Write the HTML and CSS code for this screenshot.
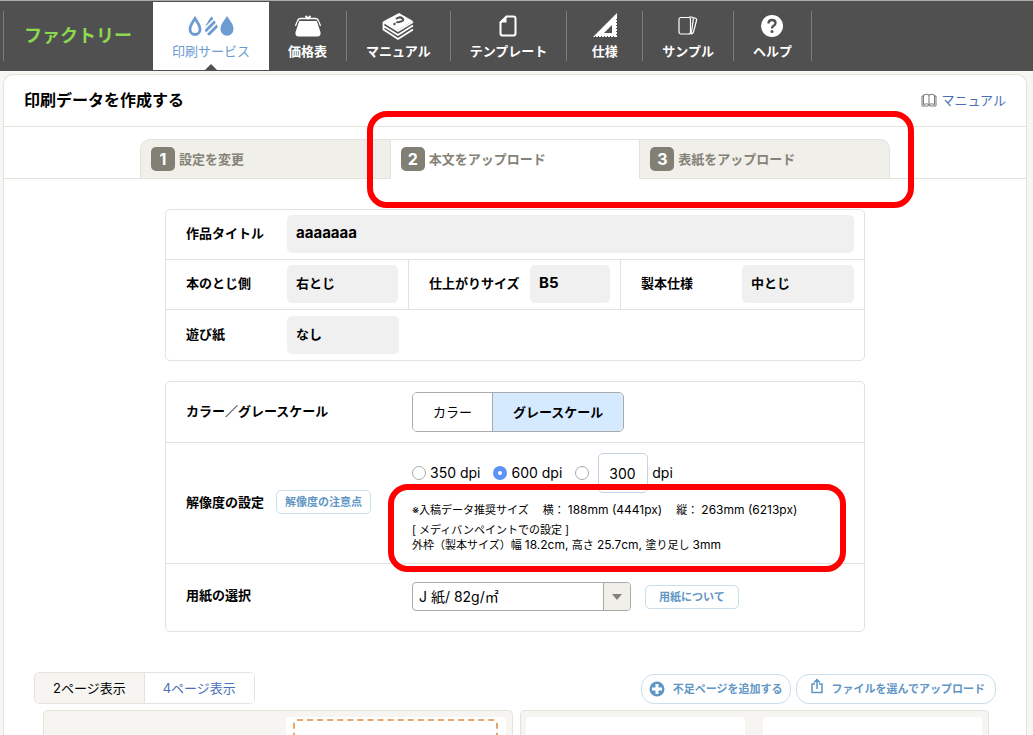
FILE: index.html
```html
<!DOCTYPE html>
<html lang="ja">
<head>
<meta charset="utf-8">
<meta name="viewport" content="width=device-width, initial-scale=1">
<title>印刷データを作成する</title>
<link rel="stylesheet" href="styles.css">
</head>
<body>
<header class="header">
  <a class="logo" href="#">ファクトリー</a>
  <nav class="nav">
    <a class="nav-item nav-item-active" href="#">
      <svg class="nav-icon" width="46" height="30" viewBox="0 0 46 30">
        <defs><clipPath id="drop-shape"><path d="M23.500 5c3 5 6.500 9 6.500 13.500a6.500 6.500 0 0 1-13 0c0-4.500 3.500-8.500 6.500-13.500z"/></clipPath></defs>
        <path d="M7 7.500C9 11 12 14 12 18.500a5 5 0 0 1-10 0c0-4.500 3-7.500 5-11z" fill="none" stroke="#6c9bd2" stroke-width="2.800"/>
        <path clip-path="url(#drop-shape)" d="M14 17L28 3M14 23.500L32 5.500M16 28L34 10" stroke="#6c9bd2" stroke-width="3" fill="none"/>
        <path d="M39 5c3 5 6.500 8 6.500 13a6.500 6.800 0 0 1-13 0c0-5 3.500-8 6.500-13z" fill="#6c9bd2"/>
      </svg>
      <span>印刷サービス</span>
    </a>
    <a class="nav-item" href="#">
      <svg class="nav-icon" width="30" height="30" viewBox="0 0 30 30">
        <path d="M6 10h18l3.500 11.500q.5 4-3 4h-19q-3.500 0-3-4z" fill="#fff"/>
        <path d="M2.500 15L5 9q.7-1.500 2.500-1.500h15Q24.300 7.500 25 9l2.500 6" fill="none" stroke="#fff" stroke-width="1.500"/>
        <path d="M5.500 10l-2 6M24.500 10l2 6" stroke="#505050" stroke-width="1"/>
        <path d="M12.500 5l2.500 2.500L17.500 5" stroke="#fff" stroke-width="1.800" fill="none"/>
      </svg>
      <span>価格表</span>
    </a>
    <a class="nav-item" href="#">
      <svg class="nav-icon" width="32" height="30" viewBox="0 0 32 30">
        <path d="M1 10.500L17 2l14 8-15 9z" fill="#fff"/>
        <path d="M1.500 11v4L16 24l15-9.500M1.500 15v3.500L16 28l15-9.500M1.500 11L16 20l15-9" fill="none" stroke="#fff" stroke-width="1.800"/>
        <path d="M14 8q4-3 6.500-.5T17 11q-2 0-2.500.8M11.500 12.500l2 1" fill="none" stroke="#505050" stroke-width="2"/>
      </svg>
      <span>マニュアル</span>
    </a>
    <a class="nav-item" href="#">
      <svg class="nav-icon" width="20" height="30" viewBox="0 0 20 30">
        <path d="M8.500 5.500h7q2 0 2 2v15q0 2-2 2h-11q-2 0-2-2v-11z" fill="none" stroke="#fff" stroke-width="2"/>
        <path d="M8.500 4.500v7h-7z" fill="#fff"/>
      </svg>
      <span>テンプレート</span>
    </a>
    <a class="nav-item" href="#">
      <svg class="nav-icon" width="26" height="30" viewBox="0 0 26 30">
        <path d="M25 2v24H1zM20 14l-8 8h8z" fill="#fff" fill-rule="evenodd"/>
        <path d="M3 25.500h20" stroke="#505050" stroke-dasharray="1 2"/>
        <path d="M24.500 8v16" stroke="#505050" stroke-dasharray="1 2"/>
      </svg>
      <span>仕様</span>
    </a>
    <a class="nav-item" href="#">
      <svg class="nav-icon" width="20" height="30" viewBox="0 0 20 30" fill="none" stroke="#fff" stroke-width="1.200">
        <rect x="1" y="6.500" width="11.500" height="16.500" rx="2"/>
        <path d="M11 6h2.500q2 .3 1.800 2.300L13.500 21q-.3 1.500-1.800 1.700M14.500 6.500l2.500.5q2 .5 1.500 2.500L15.500 21q-.7 2-2.800 1.800"/>
      </svg>
      <span>サンプル</span>
    </a>
    <a class="nav-item" href="#">
      <svg class="nav-icon" width="24" height="30" viewBox="0 0 24 30">
        <circle cx="12" cy="15" r="11" fill="#fff"/>
        <path d="M8.500 12.500q0-3.500 3.500-3.500t3.500 3q0 1.800-1.800 2.800T12 17.500" fill="none" stroke="#505050" stroke-width="2.300"/>
        <circle cx="12" cy="20.500" r="1.500" fill="#505050"/>
      </svg>
      <span>ヘルプ</span>
    </a>
  </nav>
</header>

<main class="panel">
  <div class="panel-head">
    <h1 class="title">印刷データを作成する</h1>
    <a class="manual" href="#">
      <svg width="16" height="14" viewBox="0 0 16 14" fill="none" stroke="#777" stroke-width="1">
        <path d="M2.500 2v9.500Q6 10 8 11.500q2-1.500 5.500 0V2Q10 .5 8 2 6 .5 2.500 2zM8 2v9.500M2.500 3H1v10h6l1-.7 1 .7h6V3h-1.500"/>
      </svg>
      <span>マニュアル</span>
    </a>
  </div>

  <div class="tabs-bar">
    <ol class="tabs">
      <li class="tab tab-first"><span class="step">1</span>設定を変更</li>
      <li class="tab tab-current"><span class="step">2</span>本文をアップロード</li>
      <li class="tab tab-last"><span class="step">3</span>表紙をアップロード</li>
    </ol>
    <div class="mark mark-tabs"></div>
  </div>

  <div class="form">
    <dl class="box">
      <div class="info"><div class="pair"><dt>作品タイトル</dt><dd class="latin">aaaaaaa</dd></div></div>
      <div class="info info-three">
        <div class="pair"><dt>本のとじ側</dt><dd>右とじ</dd></div>
        <div class="pair"><dt>仕上がりサイズ</dt><dd class="latin">B5</dd></div>
        <div class="pair"><dt>製本仕様</dt><dd>中とじ</dd></div>
      </div>
      <div class="info info-last"><div class="pair"><dt>遊び紙</dt><dd class="short">なし</dd></div></div>
    </dl>

    <form class="box">
      <div class="row">
        <div class="row-label">カラー／グレースケール</div>
        <div class="switch">
          <button type="button" class="switch-item">カラー</button>
          <button type="button" class="switch-item switch-on">グレースケール</button>
        </div>
      </div>
      <div class="row">
        <div class="row-label">解像度の設定<button type="button" class="small-button">解像度の注意点</button></div>
        <div class="dpi">
          <div class="choices">
            <label class="choice"><input class="radio" type="radio" name="dpi">350 dpi</label>
            <label class="choice"><input class="radio" type="radio" name="dpi" checked>600 dpi</label>
            <div class="choice">
              <input class="radio" type="radio" name="dpi" aria-label="その他の解像度">
              <input class="dpi-input" id="dpi-value" type="text" value="300">
              <label for="dpi-value">dpi</label>
            </div>
          </div>
          <div class="note">
            <p class="sizes"><span>※入稿データ推奨サイズ</span><span>横： <span class="measure">188mm (4441px)</span></span><span>縦： <span class="measure">263mm (6213px)</span></span></p>
            <p>[ メディバンペイントでの設定 ]<br>外枠（製本サイズ）幅 <span class="measure">18.2cm, </span>高さ <span class="measure">25.7cm, </span>塗り足し <span class="measure">3mm</span></p>
            <div class="mark mark-note"></div>
          </div>
        </div>
      </div>
      <div class="row row-paper">
        <label class="row-label" for="paper">用紙の選択</label>
        <div class="paper">
          <div class="select-wrap">
            <select class="select" id="paper"><option>J 紙/ 82g/㎡</option></select>
            <span class="select-arrow"></span>
          </div>
          <button type="button" class="small-button">用紙について</button>
        </div>
      </div>
    </form>
  </div>

  <div class="toolbar">
    <div class="views">
      <button type="button" class="view view-on">2ページ表示</button>
      <button type="button" class="view">4ページ表示</button>
    </div>
    <div class="actions">
      <button type="button" class="action">
        <svg width="16" height="16" viewBox="0 0 16 16"><circle cx="8" cy="8" r="7.500" fill="#5f96c3"/><path d="M8 3v10M3 8h10" stroke="#fff" stroke-width="3"/></svg>
        <span>不足ページを追加する</span>
      </button>
      <button type="button" class="action action-upload">
        <svg class="upload-icon" width="14" height="16" viewBox="0 0 14 16" fill="none" stroke="#5f96c3" stroke-width="1.500"><path d="M5 6H2v8.500h10V6H9M7 11V1.500M4 4.500l3-3 3 3"/></svg>
        <span>ファイルを選んでアップロード</span>
      </button>
    </div>
  </div>

  <div class="spreads">
    <section class="spread">
      <div class="blank"></div>
      <div class="page page-drop"><div class="drop"></div></div>
    </section>
    <section class="spread">
      <div class="page"></div>
      <div class="page"></div>
    </section>
  </div>
</main>
</body>
</html>
```
FILE: styles.css
```css
* {
  box-sizing: border-box;
}

body {
  margin: 0;
  min-height: 100vh;
  display: flex;
  flex-direction: column;
  background: #f7f6f2;
  color: #000;
  font: 13px/20px Inter, "Noto Sans CJK JP", sans-serif;
}

h1, p, ol, dl, dd {
  margin: 0;
  padding: 0;
}

a {
  color: #4a6fb5;
  text-decoration: none;
}

button, input, select {
  font: inherit;
  color: inherit;
}

button {
  padding: 0;
  background: #fff;
}

/* Header */
.header {
  display: flex;
  height: 71px;
  padding: 1px 3px 0;
  background: #505050;
  border-top: 1px solid #a9aca9;
}

.logo {
  width: 150px;
  height: 50px;
  margin-top: 9px;
  padding-left: 20px;
  border-left: 1px solid #7d7d7d;
  color: #8cd950;
  font-size: 18px;
  font-weight: 700;
  line-height: 50px;
  white-space: nowrap;
}

.nav {
  display: flex;
  align-items: flex-start;
}

.nav-item {
  display: flex;
  flex-direction: column;
  align-items: center;
  min-width: 76px;
  height: 50px;
  margin-top: 9px;
  padding: 0 19px;
  border-right: 1px solid #7d7d7d;
  color: #fff;
  font-weight: 700;
  white-space: nowrap;
}

.nav-item-active {
  position: relative;
  height: 68px;
  margin-top: 0;
  padding: 9px 19px 0;
  border: 0;
  background: #fff;
  color: #6c9bd2;
  font-weight: 400;
}

.nav-item-active::after {
  content: "";
  position: absolute;
  left: calc(50% - 6px);
  bottom: 0;
  border: 6px solid transparent;
  border-top: 0;
  border-bottom-color: #505050;
}

/* Main panel */
.panel {
  flex: 1;
  display: flex;
  flex-direction: column;
  margin: 3px 6px 0 3px;
  background: #fff;
  border: 1px solid #e3e3dc;
  border-bottom: 0;
  border-radius: 10px 10px 0 0;
}

.panel-head {
  display: flex;
  align-items: center;
  justify-content: space-between;
  height: 52px;
  padding: 0 20px 2px;
  border-bottom: 1px solid #e5e5e0;
}

.title {
  font-size: 16px;
  line-height: 24px;
}

.manual {
  display: flex;
  align-items: center;
  gap: 4px;
}

.tabs-bar {
  position: relative;
  display: flex;
  justify-content: center;
  padding: 12px 20px 0;
  border-bottom: 1px solid #e3e3dc;
}

.tabs {
  display: flex;
  width: 100%;
  max-width: 750px;
  margin-bottom: -1px;
  list-style: none;
}

.tab {
  flex: 1;
  display: flex;
  align-items: center;
  gap: 4px;
  height: 40px;
  padding-left: 10px;
  background: #f0efea;
  border: 1px solid #e3e3dc;
  border-left-width: 0;
  color: #858377;
  font-weight: 700;
}

.tab-first {
  border-left-width: 1px;
  border-top-left-radius: 10px;
}

.tab-current {
  background: #fff;
  border-bottom-color: #fff;
}

.tab-last {
  border-top-right-radius: 10px;
}

.step {
  width: 24px;
  height: 24px;
  border-radius: 5px;
  background: #828074;
  color: #fff;
  font-size: 16px;
  line-height: 24px;
  text-align: center;
}

/* Highlight frames drawn over the content */
.mark {
  position: absolute;
  border: 6px solid #f00;
  border-radius: 20px;
  pointer-events: none;
}

.mark-tabs {
  top: -16px;
  bottom: -30px;
  left: calc(50% - 148px);
  width: 547px;
}

.mark-note {
  top: -9px;
  bottom: -19px;
  left: -24px;
  width: 458px;
}

/* Form */
.form {
  width: 100%;
  max-width: 700px;
  margin: 30px auto 0;
}

.box {
  margin-bottom: 20px;
  border: 1px solid #e3e3dc;
  border-radius: 5px;
}

.info {
  border-bottom: 1px solid #e3e3dc;
}

.info-last {
  border-bottom: 0;
}

.info-three {
  display: grid;
  grid-template-columns: 242fr 212fr 244fr;
}

.pair {
  display: flex;
  align-items: center;
  padding: 5px 10px 6px 20px;
  font-weight: 700;
}

.info-last .pair {
  padding-top: 6px;
}

.info-three .pair + .pair {
  border-left: 1px solid #e3e3dc;
}

.pair dt {
  flex: none;
  width: 101px;
  padding-bottom: 2px;
}

.pair dd {
  flex: 1;
  padding: 8px 9px 10px;
  background: #f0f0f0;
  border-radius: 5px;
}

.pair .short {
  flex: none;
  width: 112px;
}

.latin {
  font-size: 15px;
}

.row {
  display: flex;
  align-items: center;
  padding: 10px 20px;
  border-bottom: 1px solid #e3e3dc;
}

.row-label {
  display: flex;
  align-items: center;
  gap: 12px;
  flex: none;
  width: 226px;
  padding-bottom: 3px;
  font-weight: 700;
}

.row-paper {
  padding: 18px 20px 20px;
  border-bottom: 0;
}

.switch {
  display: flex;
  border: 1px solid #aaa;
  border-radius: 5px;
  overflow: hidden;
}

.switch-item {
  height: 38px;
  padding: 0 20px;
  border: 0;
}

.switch-on {
  border-left: 1px solid #aaa;
  background: #d5e9ff;
  font-weight: 700;
}

.small-button {
  height: 24px;
  padding: 0 8px;
  border: 1px solid #c9dfec;
  border-radius: 5px;
  color: #5f96c3;
  font-size: 11px;
  font-weight: 700;
  line-height: 16px;
}

.choices {
  display: flex;
  align-items: center;
  gap: 13px;
  font-size: 14px;
}

.choice {
  display: flex;
  align-items: center;
  gap: 4px;
}

.radio {
  appearance: none;
  width: 14px;
  height: 14px;
  margin: 0;
  border: 1px solid #aaa;
  border-radius: 50%;
  background: #fff;
}

.radio:checked {
  border: 5px solid #5b93f7;
}

.dpi-input {
  width: 50px;
  height: 40px;
  margin-left: 5px;
  padding: 0 10px;
  border: 1px solid #c3d3e3;
  border-radius: 5px;
}

.note {
  position: relative;
  padding-top: 10px;
  font-size: 11px;
  line-height: 15px;
}

.sizes {
  display: flex;
  gap: 14px;
  height: 15px;
  margin-bottom: 5px;
}

.measure {
  font-size: 12px;
  line-height: 12px;
  white-space: pre-wrap;
}

.paper {
  display: flex;
  align-items: center;
  gap: 14px;
}

.paper .small-button {
  padding: 0 13px;
}

.select-wrap {
  position: relative;
  width: 219px;
}

.select {
  appearance: none;
  display: block;
  width: 100%;
  height: 29px;
  padding: 0 32px 0 6px;
  border: 1px solid #aaa;
  border-radius: 4px;
  background: #fff;
  font-size: 14px;
}

.select-arrow {
  position: absolute;
  top: 1px;
  right: 1px;
  bottom: 1px;
  width: 27px;
  display: flex;
  align-items: center;
  justify-content: center;
  border-left: 1px solid #aaa;
  border-radius: 0 3px 3px 0;
  background: #f0efea;
  pointer-events: none;
}

.select-arrow::before {
  content: "";
  border: 5px solid transparent;
  border-top: 6px solid #858377;
  border-bottom: 0;
}

/* Toolbar and spreads */
.toolbar {
  display: flex;
  justify-content: space-between;
  align-items: flex-end;
  margin: 20px 30px 0;
}

.views {
  display: flex;
  border: 1px solid #e3e3dc;
  border-radius: 5px;
  overflow: hidden;
}

.view {
  height: 30px;
  padding: 0 18px;
  border: 0;
  color: #4a6fb5;
}

.view-on {
  border-right: 1px solid #e3e3dc;
  background: #f6f5f1;
  color: #000;
}

.actions {
  display: flex;
  gap: 5px;
}

.action {
  display: flex;
  align-items: center;
  gap: 8px;
  height: 30px;
  padding: 0 7px;
  border: 1px solid #c9dfec;
  border-radius: 13px;
  color: #5f96c3;
  font-size: 11px;
  font-weight: 700;
}

.action-upload {
  padding: 0 10px 0 13px;
}

.upload-icon {
  margin-bottom: 7px;
}

.spreads {
  flex: 1;
  display: grid;
  grid-template-columns: 1fr 1fr;
  gap: 7px;
  margin: 6px 37px 0 39px;
}

.spread {
  display: grid;
  grid-template-columns: 1fr 1fr;
  gap: 18px;
  min-height: 24px;
  padding: 6px 6px 0 5px;
  border: 1px solid #e3e3dc;
  border-bottom: 0;
  border-radius: 5px 5px 0 0;
  background: #f6f5f1;
}

.page {
  border-radius: 4px 4px 0 0;
  background: #fff;
}

.page-drop {
  display: flex;
  padding: 2px 8px 0 7px;
}

.drop {
  flex: 1;
  border: 2px dashed #e9a66c;
  border-bottom: 0;
  border-radius: 4px 4px 0 0;
}
```
